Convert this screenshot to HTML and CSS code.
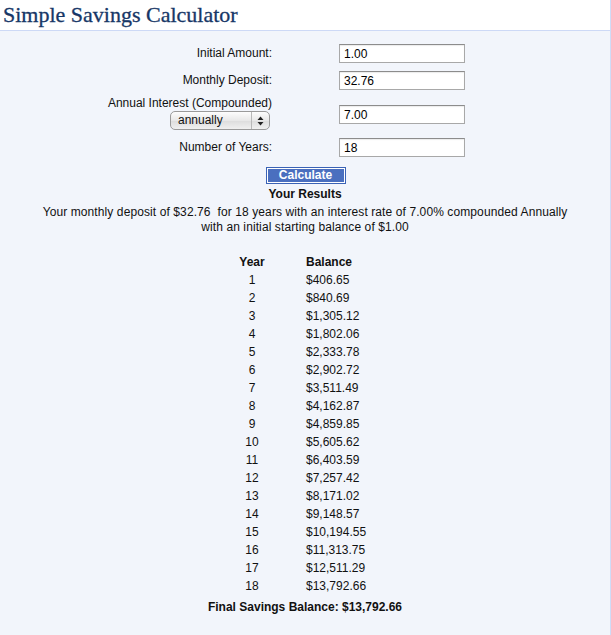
FILE: index.html
```html
<!DOCTYPE html>
<html>
<head>
<meta charset="utf-8">
<link rel="stylesheet" href="styles.css">
</head>
<body>
<div class="page">
  <div class="header"><h1 class="title">Simple Savings Calculator</h1></div>
  <div class="content">
    <div class="form">
      <div class="label">Initial Amount:</div>
      <div class="field"><span class="input">1.00</span></div>
      <div class="label">Monthly Deposit:</div>
      <div class="field"><span class="input">32.76</span></div>
      <div class="label label-stack">
        <span>Annual Interest (Compounded)</span>
        <span class="select"><span class="select-text">annually</span><span class="select-arrows"><svg width="7" height="10" viewBox="0 0 7 10"><path d="M3.5 0.5 L6.5 4 L0.5 4 Z M3.5 9.5 L6.5 6 L0.5 6 Z" fill="#222"/></svg></span></span>
      </div>
      <div class="field"><span class="input">7.00</span></div>
      <div class="label">Number of Years:</div>
      <div class="field"><span class="input">18</span></div>
    </div>
    <div class="btn-row"><span class="button">Calculate</span></div>
    <div class="results-title">Your Results</div>
    <p class="summary">Your monthly deposit of $32.76&nbsp; for 18 years with an interest rate of 7.00% compounded Annually<br>with an initial starting balance of $1.00</p>
    <table class="table">
      <thead><tr><th class="c-year">Year</th><th class="c-bal">Balance</th></tr></thead>
      <tbody>
        <tr><td class="c-year">1</td><td class="c-bal">$406.65</td></tr>
        <tr><td class="c-year">2</td><td class="c-bal">$840.69</td></tr>
        <tr><td class="c-year">3</td><td class="c-bal">$1,305.12</td></tr>
        <tr><td class="c-year">4</td><td class="c-bal">$1,802.06</td></tr>
        <tr><td class="c-year">5</td><td class="c-bal">$2,333.78</td></tr>
        <tr><td class="c-year">6</td><td class="c-bal">$2,902.72</td></tr>
        <tr><td class="c-year">7</td><td class="c-bal">$3,511.49</td></tr>
        <tr><td class="c-year">8</td><td class="c-bal">$4,162.87</td></tr>
        <tr><td class="c-year">9</td><td class="c-bal">$4,859.85</td></tr>
        <tr><td class="c-year">10</td><td class="c-bal">$5,605.62</td></tr>
        <tr><td class="c-year">11</td><td class="c-bal">$6,403.59</td></tr>
        <tr><td class="c-year">12</td><td class="c-bal">$7,257.42</td></tr>
        <tr><td class="c-year">13</td><td class="c-bal">$8,171.02</td></tr>
        <tr><td class="c-year">14</td><td class="c-bal">$9,148.57</td></tr>
        <tr><td class="c-year">15</td><td class="c-bal">$10,194.55</td></tr>
        <tr><td class="c-year">16</td><td class="c-bal">$11,313.75</td></tr>
        <tr><td class="c-year">17</td><td class="c-bal">$12,511.29</td></tr>
        <tr><td class="c-year">18</td><td class="c-bal">$13,792.66</td></tr>
      </tbody>
    </table>
    <div class="final">Final Savings Balance: $13,792.66</div>
  </div>
</div>
</body>
</html>
```
FILE: styles.css
```css
html, body {
  margin: 0;
  padding: 0;
  background: #ffffff;
}
body {
  font-family: "Liberation Sans", Arial, sans-serif;
  font-size: 12px;
  color: #111;
}
.page {
  width: 610px;
  height: 635px;
  border-right: 1px solid #cfdcf7;
  display: flex;
  flex-direction: column;
}
.header {
  height: 30px;
  background: #fff;
  border-bottom: 1px solid #cdd9f6;
}
.title {
  margin: 0;
  padding: 3px 0 0 3px;
  font-family: "Liberation Serif", "Times New Roman", serif;
  font-weight: normal;
  font-size: 22px;
  line-height: 24px;
  color: #173767;
  -webkit-text-stroke: 0.3px #173767;
}
.content {
  flex: 1;
  background: #f2f5fb;
  padding-top: 13px;
}
.form {
  display: grid;
  grid-template-columns: 180px 126px;
  column-gap: 67px;
  row-gap: 8px;
  grid-template-rows: 19px 19px 32px 19px;
  margin-left: 92px;
}
.label {
  text-align: right;
  display: flex;
  align-items: center;
  justify-content: flex-end;
  line-height: 13px;
}
.label-stack {
  flex-direction: column;
  align-items: flex-end;
  justify-content: flex-start;
  margin-top: -1px;
}
.field {
  display: flex;
  align-items: center;
}
.input {
  box-sizing: border-box;
  width: 126px;
  height: 19px;
  background: #fff;
  border: 1px solid #a8a8a8;
  border-top-color: #8c8c8c;
  box-shadow: inset 0 1px 1px rgba(0,0,0,0.08);
  padding: 2px 3px 0 4px;
  font-size: 12px;
  line-height: 14px;
  color: #000;
}
.select {
  box-sizing: border-box;
  margin-top: 1px;
  margin-right: 2px;
  width: 100px;
  height: 19px;
  border: 1px solid #9a9a9a;
  border-radius: 5px;
  background: linear-gradient(#fdfdfd, #e8e8e8 50%, #dcdcdc 51%, #f0f0f0);
  display: flex;
  align-items: center;
  font-size: 12px;
}
.select-text {
  flex: 1;
  text-align: left;
  padding-left: 7px;
  color: #111;
}
.select-arrows {
  width: 17px;
  height: 17px;
  border-left: 1px solid #b8b8b8;
  display: flex;
  align-items: center;
  justify-content: center;
}
.btn-row {
  display: flex;
  justify-content: center;
  margin-top: 10px;
}
.button {
  box-sizing: border-box;
  width: 80px;
  height: 17px;
  background: #4a6fbf;
  border: 1px solid #3a62b5;
  box-shadow: inset 0 0 0 1px #ffffff;
  color: #fff;
  font-weight: bold;
  font-size: 12px;
  line-height: 15px;
  text-align: center;
  margin-left: 1px;
}
.results-title {
  text-align: center;
  font-weight: bold;
  line-height: 15px;
  margin-top: 3px;
}
.summary {
  margin: 3px 0 0;
  text-align: center;
  line-height: 15px;
  letter-spacing: 0.1px;
}
.table {
  border-collapse: collapse;
  margin: 17px auto 0;
  width: 164px;
  position: relative;
  left: 1px;
}
.table th, .table td {
  padding: 0;
  height: 18px;
  line-height: 14px;
}
.table th {
  font-weight: bold;
  height: 19px;
}
.c-year {
  width: 56px;
  text-align: center;
}
.c-bal {
  text-align: left;
  padding-left: 26px !important;
}
.final {
  text-align: center;
  font-weight: bold;
  margin-top: 5px;
  line-height: 14px;
}
```
